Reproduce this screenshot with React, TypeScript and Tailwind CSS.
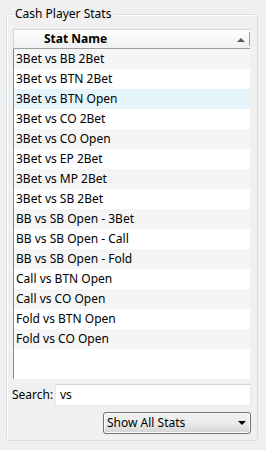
import React from "react";

const rows = [
  "3Bet vs BB 2Bet",
  "3Bet vs BTN 2Bet",
  "3Bet vs BTN Open",
  "3Bet vs CO 2Bet",
  "3Bet vs CO Open",
  "3Bet vs EP 2Bet",
  "3Bet vs MP 2Bet",
  "3Bet vs SB 2Bet",
  "BB vs SB Open - 3Bet",
  "BB vs SB Open - Call",
  "BB vs SB Open - Fold",
  "Call vs BTN Open",
  "Call vs CO Open",
  "Fold vs BTN Open",
  "Fold vs CO Open",
];

export default function App() {
  return (
    <div
      className="w-[266px] h-[450px] bg-[#f0f0f0] pt-[14px] pl-[6px] text-[12px] text-black"
      style={{ fontFamily: '"Noto Sans", "Open Sans", sans-serif' }}
    >
      <div className="relative w-[252px] h-[427px] border border-[#d5dfe5] rounded-[3px] shadow-[inset_1px_1px_0_#ffffff] pl-[6px] pr-[6px] pt-[14px] flex flex-col">
        <div className="absolute left-[6px] top-[-9px] px-[2px] bg-[#f0f0f0] leading-[16px]">
          Cash Player Stats
        </div>
        {/* table */}
        <div className="w-[237px] h-[350px] bg-white flex flex-col">
          <div className="h-[20px] flex items-center border-t border-b border-t-[#d5d5d5] border-b-[#a0a0a0] border-l border-l-[#d5d5d5] bg-gradient-to-b from-white to-[#f0f0f0] relative">
            <span className="pl-[30px] font-bold leading-[18px]">Stat Name</span>
            <div className="ml-auto mr-[4px] w-0 h-0 border-l-[4px] border-r-[4px] border-b-[4px] border-l-transparent border-r-transparent border-b-[#5a5a5a] mt-[2px]" />
            <div className="w-px h-[14px] bg-[#a0a0a0] mr-[0px]" />
          </div>
          <div className="flex-1 border-l border-l-[#828790] flex flex-col">
            {rows.map((r, i) => (
              <div
                key={r}
                className={
                  "h-[20px] leading-[20px] pl-[2px] whitespace-nowrap " +
                  (i === 2 ? "bg-[#e5f3fb]" : i % 2 === 0 ? "bg-[#f5f5f5]" : "bg-white")
                }
              >
                {r}
              </div>
            ))}
          </div>
        </div>
        {/* search */}
        <div className="mt-[5px] flex items-center ml-[-1px]">
          <span className="w-[43px]">Search:</span>
          <div className="w-[196px] h-[22px] bg-white border border-[#e3e9ef] border-t-[#d5d5d5] flex items-center pl-[4px]">
            vs
          </div>
        </div>
        {/* dropdown */}
        <div className="mt-[6px] flex justify-end pr-[0px]">
          <div className="w-[148px] h-[22px] rounded-[3px] border border-[#707070] bg-gradient-to-b from-[#f2f2f2] via-[#ebebeb] to-[#d4d4d4] flex items-center pl-[3px] pr-[4px] shadow-[inset_0_0_0_1px_#fcfcfc]">
            <span>Show All Stats</span>
            <div className="ml-auto w-0 h-0 border-l-[4px] border-r-[4px] border-t-[4px] border-l-transparent border-r-transparent border-t-black" />
          </div>
        </div>
      </div>
    </div>
  );
}
